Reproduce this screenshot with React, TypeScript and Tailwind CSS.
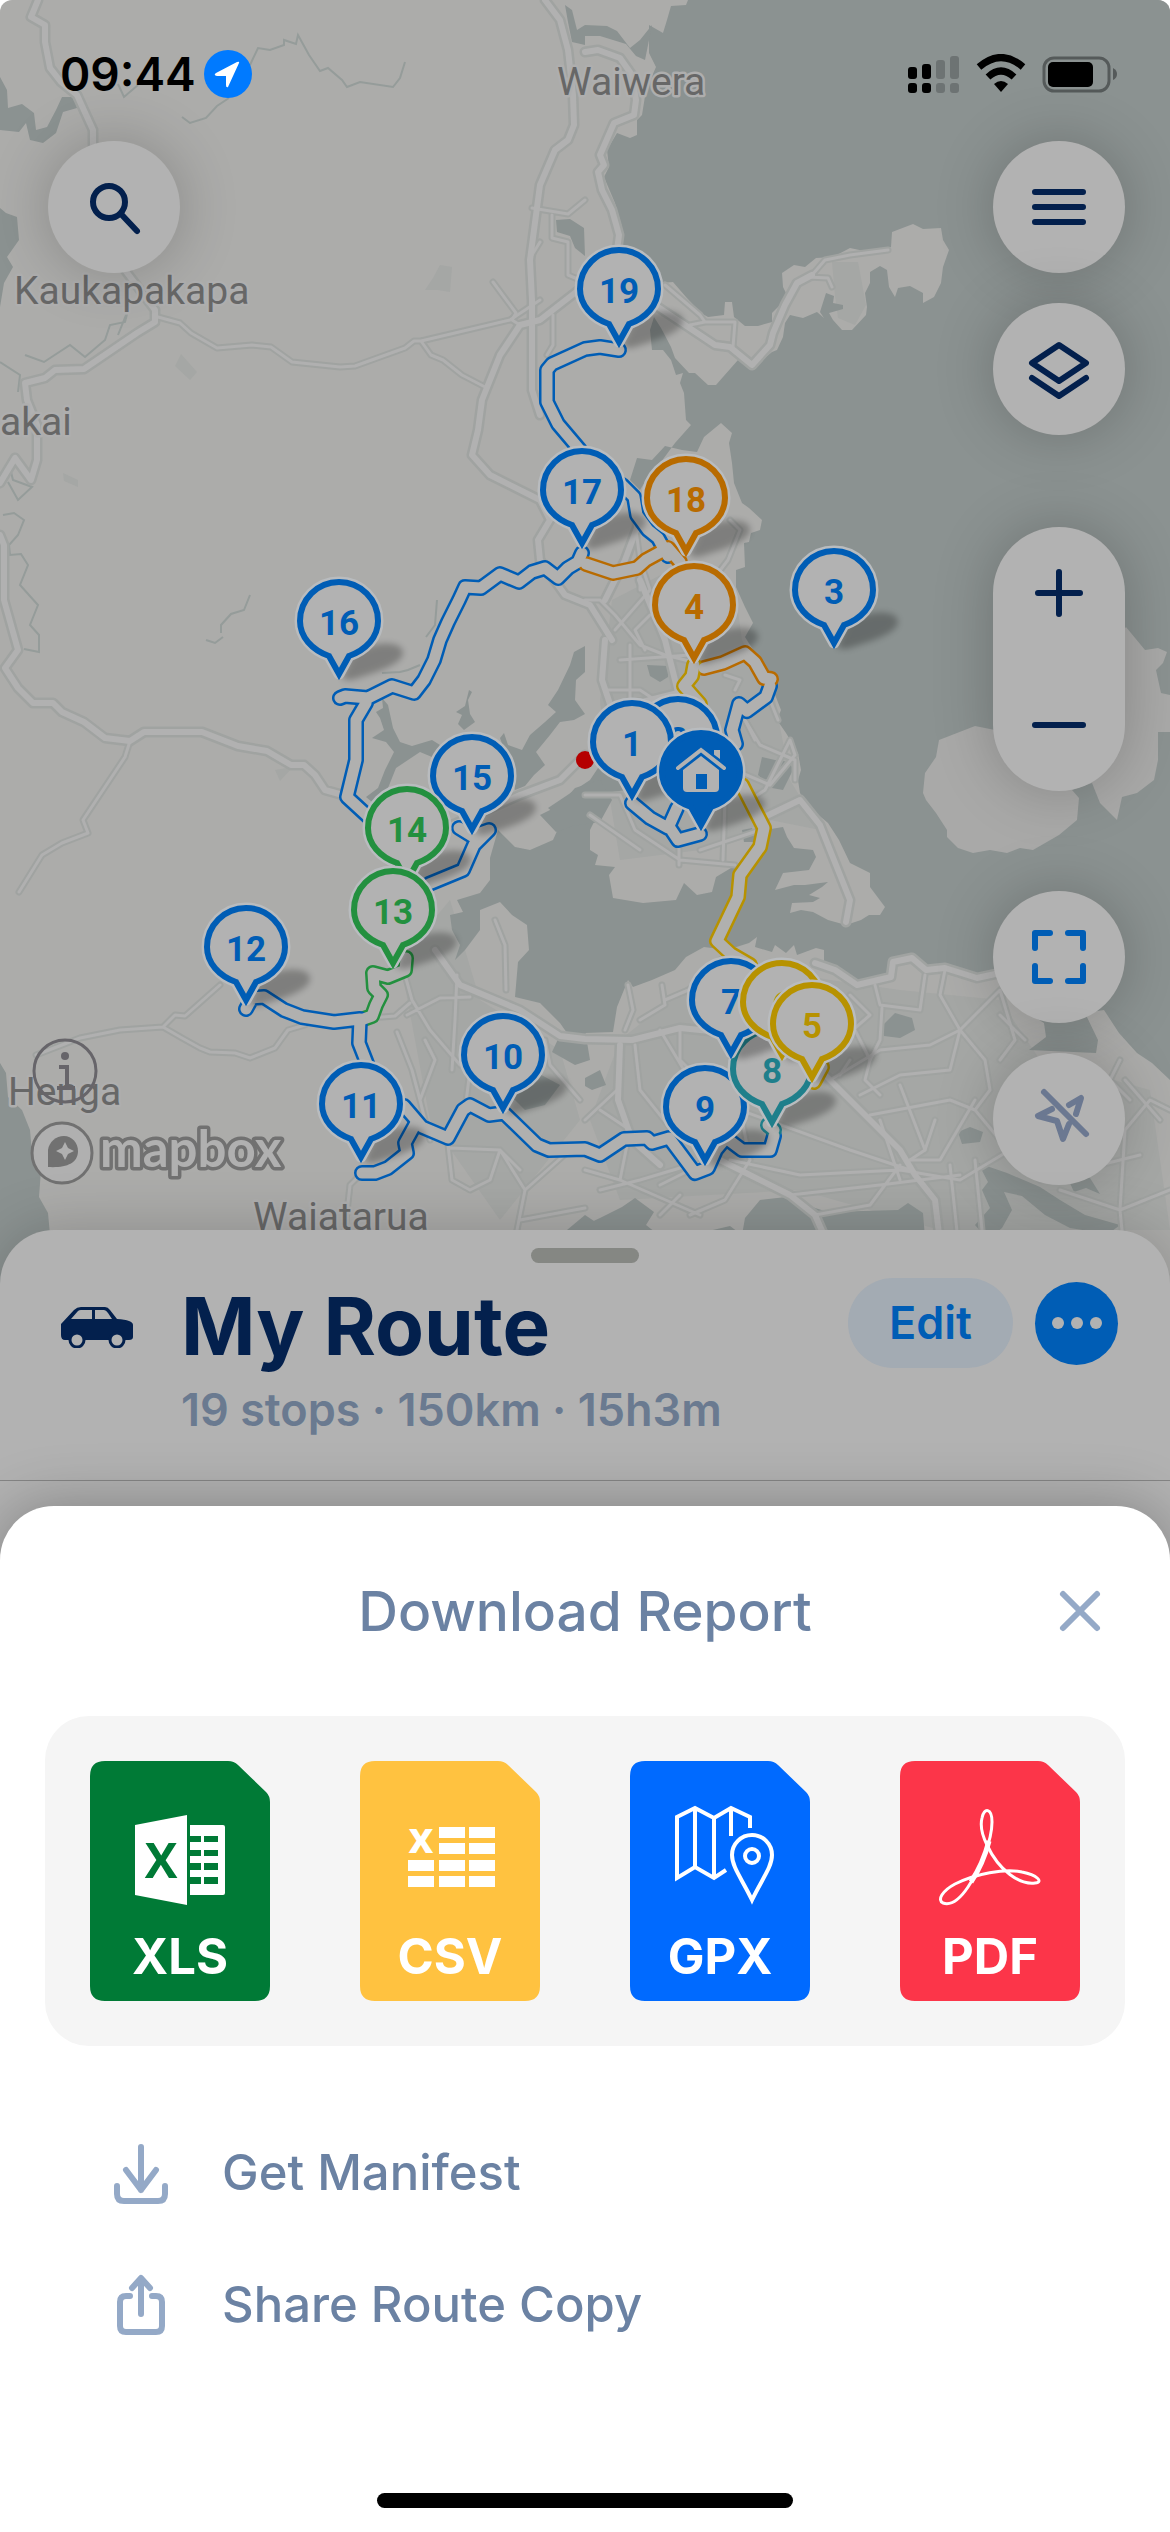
import type { ReactNode } from "react";

type Tone = "blue" | "green" | "orange" | "yellow" | "teal";

const TONES: Record<Tone, string> = {
  blue: "#005db5",
  green: "#23903f",
  orange: "#b86b00",
  yellow: "#b79200",
  teal: "#1f7f8b",
};

const WATER = [
  // open sea with the outer coast
  "M688 0L686 5 671 6 667 20 663 33 649 25 649 53 656 67 646 90 642 115 637 120 637 135 630 138 617 133 607 150 609 167 604 177 615 203 622 227 620 245 640 270 661 283 673 282 686 297 701 313 708 317 724 315 725 302 732 302 734 317 745 326 758 326 772 322 772 313 788 297 783 287 782 273 794 265 805 267 816 258 833 257 850 248 869 252 891 247 892 232 913 224 923 229 941 228 943 240 949 250 943 267 941 283 934 297 923 303 923 293 910 286 898 288 895 297 889 287 887 270 880 266 870 272 870 283 865 293 867 307 866 315 852 330 842 330 833 320 829 313 843 309 843 305 833 303 834 296 826 293 820 312 824 318 817 312 803 318 790 315 785 323 783 337 777 350 772 352 760 362 753 368 738 360 723 377 716 385 708 385 695 373 689 373 675 358 671 347 661 328 654 317 650 330 652 350 663 350 671 360 676 375 683 373 680 383 684 393 686 420 691 425 675 443 661 462 652 470 640 490 630 480 637 458 652 460 665 446 682 450 697 452 704 437 721 423 732 433 729 443 732 463 734 483 742 503 749 508 762 520 760 530 751 533 749 542 744 543 745 567 736 570 736 587 745 607 753 623 745 637 764 667 772 687 781 710 777 720 786 733 798 753 801 770 798 780 800 793 809 807 828 823 839 840 850 863 870 873 870 887 885 907 880 915 869 915 861 920 846 925 828 920 813 912 801 910 790 913 792 903 813 902 820 898 809 895 822 887 828 882 805 885 794 885 775 890 783 873 809 870 816 857 813 850 794 848 787 837 783 827 765 830 755 850 745 860 736 865 716 877 712 892 697 895 684 883 676 900 643 903 613 898 609 875 615 867 595 865 598 855 590 850 590 830 605 800 612 775 600 765 590 780 572 792 548 808 562 820 553 840 530 850 515 847 498 830 490 858 490 880 480 893 457 900 463 912 450 915 452 930 460 945 455 960 465 950 480 930 480 910 500 902 512 915 527 925 529 950 518 962 515 997 540 1003 560 1023 567 1033 585 1033 613 1032 617 1007 628 980 633 987 652 980 675 970 686 957 704 947 727 950 749 943 757 937 755 947 772 952 775 945 786 953 794 945 797 955 816 948 824 950 824 963 846 977 861 985 891 977 893 962 910 956 926 965 947 968 977 977 995 973 1007 993 1018 1007 1044 1023 1046 1037 1029 1050 1096 1053 1098 1040 1085 1013 1104 1010 1119 1033 1137 1053 1152 1063 1170 1080V0Z",
  "M0 77L7 90 8 108 22 104 34 113 36 130 47 127 56 110 62 97 75 97 77 108 63 112 56 133 43 143 30 140 26 123 19 132 0 130Z",
  "M0 208L6 213 17 217 19 240 7 257 13 267 4 283 0 307Z",
  "M0 1063L6 1073 8 1097 22 1110 30 1130 32 1153 41 1170 39 1197 48 1213 56 1300 0 1300Z",
  "M585 25L607 26 617 31 630 48 640 40 652 25 645 60 636 56 626 44 600 36 585 36Z",
  "M556 220L570 219 584 228 585 256 575 248 570 236 557 232Z",
  "M565 5L572 10 577 30 585 25 585 45 572 42 568 22Z",
  "M600 770L620 772 626 790 612 792 604 800Z",
  // creeks of the upper harbour
  "M382 698L388 705 393 728 400 742 412 746 432 740 440 745 432 757 420 752 408 760 396 768 388 788 372 802 366 797 378 788 385 770 394 752 386 742 372 738 384 730 380 718 376 712 383 708Z",
  "M469 690L472 692 468 700 470 714 475 722 464 730 458 724 462 715 456 712 465 706Z",
  "M585 646L574 652 570 665 558 690 548 705 556 712 545 722 530 735 522 750 508 745 504 733 500 738 505 752 490 765 510 770 515 790 525 786 534 775 545 765 536 752 550 735 560 722 574 720 585 714 575 700 576 680 585 672Z",
  "M540 815L560 805 575 788 600 780 612 800 600 822 572 826 556 832Z",
  // inland lakes
  "M647 665L668 666 668 677 660 682 650 676Z",
  "M762 757L775 760 790 762 793 770 783 790 772 788 758 775Z",
  "M742 830L752 828 758 842 744 842Z",
  "M880 1028L895 1013 912 1018 915 1030 900 1038 884 1036Z",
  "M958 1132L970 1127 983 1132 980 1142 962 1144Z",
  "M560 1035L585 1030 590 1060 575 1065 552 1052Z",
  "M500 1092L532 1070 560 1085 545 1105 525 1110 515 1100Z",
  "M585 1078L600 1070 606 1085 592 1090 585 1086Z",
  // southern harbour and river
  "M585 1225L600 1218 622 1207 635 1198 654 1212 646 1225 665 1240 700 1233 730 1226 742 1235 745 1218 760 1200 786 1197 815 1208 828 1212 898 1210 908 1203 923 1213 930 1300 585 1300Z",
  "M555 1240L585 1215 600 1225 600 1300 560 1300Z",
  "M978 1163L1007 1173 1040 1187 1060 1200 1085 1215 1120 1225 1108 1234 1070 1228 1045 1215 1022 1196 1004 1192 1012 1210 1002 1228 988 1240 975 1225 990 1208 982 1190 988 1182Z",
  "M1065 1172L1090 1178 1100 1194 1086 1188 1074 1192Z",
];

const ISLAND =
  "M923 793L925 773 936 757 939 740 975 726 1000 731 1060 700 1126 627 1145 650 1158 648 1167 652 1163 663 1156 670 1161 693 1170 695 1170 732 1158 732 1158 760 1154 780 1137 793 1122 797 1117 820 1100 803 1092 783 1072 790 1079 798 1077 820 1059 835 1033 850 1020 848 1007 853 990 850 973 853 958 848 947 837 947 830 936 813 926 800Z";

const SUBURBS = [
  "M612 600L690 560 735 590 742 640 775 700 790 780 820 830 770 820 700 850 620 860 610 800 600 700Z",
  "M400 960L450 900 480 1000 560 1050 580 1120 500 1220 430 1120Z",
  "M620 1040L720 960 830 980 900 990 1000 1000 1040 1060 1150 1090 1170 1230 940 1230 800 1190 620 1200 590 1120Z",
  "M832 262L858 262 866 305 855 325 838 318 835 296Z",
  "M440 265L452 267 450 292 438 290 425 290 433 278Z",
  "M181 354L197 372 190 380 175 366Z",
  "M63 473L78 480 78 487 64 481Z",
  "M275 770L293 767 280 781Z",
];

const CREEK_LINES = [
  "M250 65L258 48 270 50 284 45 284 40 296 44 298 35 309 55 320 71 328 68 342 80 347 87 360 82 393 87 400 78 405 62",
  "M182 117L190 123 206 118 217 106 229 98",
  "M118 84L124 97 138 85",
  "M10 468L13 480 32 487 18 500 8 482M3 515L14 513 24 520 18 535 9 545 10 555 21 554 28 565 20 585 38 605 30 625 39 635V652L24 649",
  "M250 595L244 610 231 614 221 625V633M206 640L215 643 223 637",
  "M437 600L435 625 426 637M382 673L400 672 408 670 420 665",
  "M0 362L20 375 18 392M25 355L44 362 70 345 85 357 105 340 110 325 125 322 128 310 118 335",
];

const ROADS_MAJOR = [
  "M38 0L31 17 45 25 45 42 50 68 61 82 77 95 93 130 93 145M125 270L140 290 155 310 155 322 137 333 84 369 55 370 45 378 25 383 27 400 37 425 37 460 31 480 15 458 6 473 0 483",
  "M0 535L4 545 4 600 18 650 5 668 18 688 33 703 53 703 62 712 84 722 105 738 130 741 144 732 202 732 238 746 267 751 291 765 304 765 315 775 325 790 350 797",
  "M545 0L560 20 568 50 573 95 574 125 568 140 555 150 540 185 530 260 532 300 532 390 540 415",
  "M585 285L540 320 520 325 500 355 482 400 478 430 472 455 490 475 540 500 550 520 538 540 540 560 565 595 590 605 612 640",
  "M585 52L598 50 620 58 632 75 636 100 634 115 614 123 600 155 604 165 598 172 602 190 612 210 619 235 617 250",
  "M655 305L715 345 730 347 752 365 770 345 773 333 785 305 797 283 812 275",
  "M445 828L520 795 560 780 585 755",
  "M435 950L460 985 520 1010 560 1036 585 1039 632 1040 680 1028 720 1032",
  "M815 963L835 970 857 985 891 977 893 962 912 958 926 970 945 968 977 978 1000 973",
  "M820 1070L870 1120 900 1150 915 1175 935 1200 942 1260",
  "M720 1160L790 1195 815 1215 835 1260",
  "M605 600L625 560 640 520M605 640L602 680 612 710 650 700 690 690M640 580L665 640 680 700",
  "M758 820L800 800 820 825 850 900 846 922",
  "M620 1045L618 1100 632 1140 660 1165",
];

const ROADS_MINOR = [
  "M158 317L180 323 191 333 217 348 252 345 271 347 292 362 340 367 355 366 405 348 414 341 421 341 510 320 540 300M421 341L431 355 443 360 462 375 485 387",
  "M493 282L516 313 512 320 520 325M532 208L568 214 585 200M552 215V238L568 242V275L580 280M553 315V345L547 355M532 255L540 242",
  "M130 741L125 757 83 820 88 833 62 843 42 855 19 892",
  "M36 1055L80 1038 120 1030 163 1027 175 1015 185 1016 220 985M163 1027L182 1038 200 1048 210 1052 235 1053 250 1058 275 1048 288 1030 305 1025",
  "M812 275L825 260 850 255 888 250M808 277L828 278 832 287M665 285L700 315 705 322 690 325M705 322L735 322 733 347",
  "M585 600L600 600 615 615 640 645 665 655 705 665M615 630L650 590 640 560M620 660L690 655M607 690L640 690 700 730M630 645V700M650 615L635 630 645 650",
  "M700 700L720 740 735 770 770 785 795 755 790 740 765 790 750 800M720 760L700 740M745 720L760 745 795 760 795 780M640 590L640 560 632 500M730 520L740 530 728 560 705 590",
  "M585 795L620 795 635 830 680 860 735 865M679 830V865M725 800L723 860M640 850L590 815M700 850L760 830",
  "M735 690L740 680 725 675M770 700L778 720M745 720L755 740",
  "M628 985L633 1010 625 1030M635 1045L640 1090 680 1140M660 1030L690 1080M617 1090L585 1120M680 1030L680 1060 710 1090M665 1000L700 985 720 960M640 1020L665 1005 662 985",
  "M405 975L412 1000 430 1030 460 1065M457 975L455 1020 452 1070M407 1015L440 998 470 997M370 1018L395 1016 410 1003M420 1100L435 1060 425 1040M470 1070L465 1110M397 1032L412 1070 420 1100 430 1140M545 1040L550 1065 580 1100",
  "M448 1145L452 1180 470 1190 490 1180 500 1150M500 1150L525 1190 515 1240M525 1190L570 1150M450 1148L500 1150 520 1170M345 1230L350 1185 365 1170M520 1220L585 1208",
  "M495 920L505 945 506 990",
  "M875 985L880 1005 920 1010 925 975M945 970L940 995 960 1030 1000 990 1015 1040 1000 1060M882 1008L880 1040 870 1060M960 1030L950 1070 900 1075 860 1095M1000 1015L1025 1040",
  "M830 1080L880 1050 930 1045 960 1030M870 1115L950 1100 975 1110 1000 1140 1040 1180M960 1030L985 1060 990 1090 975 1110M880 1120L900 1180M900 1085L925 1150 910 1160",
  "M730 1160L800 1175 900 1170 960 1180 1010 1150M790 1195L880 1185 960 1175M815 1215L870 1205 900 1165M700 1080L740 1110 750 1160 725 1200 690 1215M740 1110L850 1150 910 1170",
  "M585 1170L620 1180 700 1215M620 1180L630 1130 600 1110M660 1185L690 1170 720 1150M660 1215L680 1195M600 1190L640 1180 690 1165",
  "M950 1165L960 1260M975 1160L985 1260M910 1160L940 1160 975 1100M1125 1130L1150 1100 1170 1110M1125 1130L1120 1210 1170 1190M1100 1165L1140 1155M1060 1190L1120 1210 1125 1260M1120 1060L1110 1080 1130 1100",
  "M855 1030L870 1060 865 1080 880 1095M830 1050L870 1015 850 995M840 1075L850 1060M935 1120L925 1150M1125 1080L1160 1120",
];

const ROUTES: { tone: Tone; d: string }[] = [
  { tone: "blue", d: "M619 350L600 347 585 349 552 364 547 370 547 402 558 424 580 450" },
  { tone: "blue", d: "M622 485L634 497 637 515 648 530 658 538 668 556" },
  { tone: "blue", d: "M582 553L578 562 568 568 558 578 545 568 532 572 519 582 500 574 481 588 465 587 459 600 448 622 440 640 434 660 424 680 414 693 392 686 368 698 345 696 340 698" },
  { tone: "blue", d: "M366 703L356 720 356 760 347 797 372 820" },
  { tone: "blue", d: "M459 828L472 836 489 830 474 845 463 870 429 884" },
  { tone: "orange", d: "M586 564L613 573 637 568 646 560 668 548 680 562" },
  { tone: "blue", d: "M770 686L766 697 747 711 739 704 732 730 736 744" },
  { tone: "orange", d: "M704 668L723 663 745 653 755 662 764 678 771 679" },
  { tone: "yellow", d: "M694 665L692 676 684 686 700 704" },
  { tone: "yellow", d: "M742 785L764 828 760 847 740 875 738 897 717 941 731 954 750 965" },
  { tone: "blue", d: "M632 803L650 818 668 828 677 808M670 828L678 840 700 834" },
  { tone: "green", d: "M406 958L405 970 388 977 373 973 374 988 381 995 376 1005 372 1016 358 1021" },
  { tone: "blue", d: "M246 1009L252 998 264 997 284 1010 302 1017 334 1022 360 1019 359 1043 368 1066" },
  { tone: "blue", d: "M404 1106L422 1127 448 1138 463 1110 470 1105 489 1115 504 1113 537 1145 549 1150 585 1149 600 1155 624 1139 647 1138 652 1143 669 1138 695 1173 708 1168 716 1150 726 1138 742 1150 770 1150 774 1136" },
  { tone: "blue", d: "M416 1123L405 1143 407 1153 388 1168 375 1173 362 1173" },
  { tone: "teal", d: "M768 1125L774 1130" },
  { tone: "yellow", d: "M822 1067L814 1082" },
];

const PINS: { x: number; y: number; label: string; tone: Tone }[] = [
  { x: 619, y: 289, label: "19", tone: "blue" },
  { x: 582, y: 490, label: "17", tone: "blue" },
  { x: 686, y: 498, label: "18", tone: "orange" },
  { x: 834, y: 590, label: "3", tone: "blue" },
  { x: 694, y: 605, label: "4", tone: "orange" },
  { x: 339, y: 621, label: "16", tone: "blue" },
  { x: 678, y: 738, label: "2", tone: "blue" },
  { x: 632, y: 742, label: "1", tone: "blue" },
  { x: 472, y: 776, label: "15", tone: "blue" },
  { x: 407, y: 828, label: "14", tone: "green" },
  { x: 393, y: 910, label: "13", tone: "green" },
  { x: 246, y: 947, label: "12", tone: "blue" },
  { x: 503, y: 1055, label: "10", tone: "blue" },
  { x: 361, y: 1104, label: "11", tone: "blue" },
  { x: 705, y: 1107, label: "9", tone: "blue" },
  { x: 772, y: 1069, label: "8", tone: "teal" },
  { x: 731, y: 1000, label: "7", tone: "blue" },
  { x: 782, y: 1002, label: "6", tone: "yellow" },
  { x: 812, y: 1024, label: "5", tone: "yellow" },
];

const PLACES = [
  { x: 557, y: 95, name: "Waiwera" },
  { x: 14, y: 304, name: "Kaukapakapa" },
  { x: 0, y: 435, name: "akai" },
  { x: 8, y: 1105, name: "Henga" },
  { x: 253, y: 1230, name: "Waiatarua" },
];

const PIN_SHAPE =
  "M0 53L-10 35C-27 29-39 16-39 0A39 39 0 0 1 39 0C39 16 27 29 10 35Z";

function PinBase({ color, solid = false }: { color: string; solid?: boolean }) {
  return (
    <>
      <path d="M3 58L12 36C28 20 62 18 64 31C65 43 36 52 12 59Z" fill="#000" opacity=".26" filter="url(#soft)" />
      <path d={PIN_SHAPE} fill="#b9bcbf" stroke="#b9bcbf" strokeWidth="11" strokeLinejoin="round" />
      <path d={PIN_SHAPE} fill={solid ? color : "#b2b2b2"} stroke={color} strokeWidth="6" />
    </>
  );
}

function RouteMap() {
  return (
    <svg
      className="absolute inset-0 h-full w-full"
      viewBox="0 0 1170 1290"
      preserveAspectRatio="xMidYMin slice"
      role="img"
      aria-label="Route map with 19 stops"
    >
      <defs>
        <filter id="soft" x="-30%" y="-30%" width="160%" height="160%">
          <feGaussianBlur stdDeviation="3" />
        </filter>
      </defs>
      <rect width="1170" height="1290" fill="#acacaa" />
      <g fill="#a5a7a5">
        {SUBURBS.map((d) => (
          <path key={d} d={d} />
        ))}
      </g>
      <g fill="#8b9291">
        {WATER.map((d) => (
          <path key={d} d={d} />
        ))}
      </g>
      <path d={ISLAND} fill="#a9a9a8" />
      <g fill="none" stroke="#959c9a" strokeWidth="2">
        {CREEK_LINES.map((d) => (
          <path key={d} d={d} />
        ))}
      </g>
      <g fill="none" strokeLinejoin="round" strokeLinecap="round">
        {ROADS_MINOR.map((d) => (
          <path key={d} d={d} stroke="#a0a3a1" strokeWidth="7" />
        ))}
        {ROADS_MAJOR.map((d) => (
          <path key={d} d={d} stroke="#a0a3a1" strokeWidth="11" />
        ))}
        {ROADS_MINOR.map((d) => (
          <path key={d} d={d} stroke="#b0b0b0" strokeWidth="3" />
        ))}
        {ROADS_MAJOR.map((d) => (
          <path key={d} d={d} stroke="#b1b1b1" strokeWidth="6" />
        ))}
      </g>
      <g fontFamily="Roboto, sans-serif" fontSize="39" fill="#676767" stroke="#aeaeae" strokeWidth="5" paintOrder="stroke" strokeLinejoin="round">
        {PLACES.map((p) => (
          <text key={p.name} x={p.x} y={p.y}>
            {p.name}
          </text>
        ))}
      </g>
      <g fill="none" strokeLinejoin="round" strokeLinecap="round">
        {ROUTES.map((r) => (
          <path key={r.d} d={r.d} stroke={TONES[r.tone]} strokeWidth="16" />
        ))}
        {ROUTES.map((r) => (
          <path key={r.d} d={r.d} stroke="#b0b0af" strokeWidth="11" />
        ))}
      </g>
      <circle cx="585" cy="760" r="9" fill="#b50000" />
      {PINS.map((p) => (
        <g key={p.label} transform={`translate(${p.x} ${p.y})`}>
          <PinBase color={TONES[p.tone]} />
          <text y="14" textAnchor="middle" fontFamily="Roboto, sans-serif" fontWeight="700" fontSize="35" fill={TONES[p.tone]}>
            {p.label}
          </text>
        </g>
      ))}
      <g transform="translate(701 772)">
        <PinBase color={TONES.blue} solid />
        <path d="M14-21V-12L18-8V-21Z" fill="#b2b2b2" stroke="#b2b2b2" strokeWidth="2" />
        <path d="M-18-2L0-16 18-2V16Q18 20 14 20H-14Q-18 20-18 16Z" fill="#b2b2b2" />
        <path d="M-23-5L0-22 23-5" fill="none" stroke="#005db5" strokeWidth="8" />
        <path d="M-23-4L0-22 23-4" fill="none" stroke="#b2b2b2" strokeWidth="4" strokeLinecap="round" />
        <rect x="-5" y="2" width="11" height="15" fill="#005db5" />
      </g>
      <g fill="none" stroke="#67656a" strokeWidth="3">
        <circle cx="65" cy="1071" r="31" />
        <path d="M59 1067H67V1088M57 1088H75" strokeWidth="4" />
        <circle cx="65" cy="1056" r="4" fill="#67656a" stroke="none" />
      </g>
      <circle cx="62" cy="1153" r="30" fill="#b0b0b0" stroke="#717171" strokeWidth="3" />
      <path d="M48 1167V1150C49 1142 56 1136 64 1136C72 1136 78 1143 78 1151C78 1164 65 1168 48 1167Z" fill="#717171" />
      <path d="M65 1142L68 1148 74 1151 68 1154 65 1160 62 1154 56 1151 62 1148Z" fill="#b0b0b0" />
      <text x="100" y="1167" fontFamily="Lato, sans-serif" fontWeight="700" fontSize="51" fill="#b0b0b0" stroke="#717171" strokeWidth="7" paintOrder="stroke" strokeLinejoin="round">
        mapbox
      </text>
    </svg>
  );
}

function StatusBar() {
  return (
    <div className="flex h-[141px] items-start justify-between pt-[50px] pr-[52px] pl-[60px] text-black">
      <div className="flex items-center gap-2">
        <time className="text-[46px] leading-[48px] font-semibold">09:44</time>
        <svg className="size-12" viewBox="0 0 48 48" aria-label="Location in use">
          <circle cx="24" cy="24" r="24" fill="#007aff" />
          <path d="M35 13L24 37Q22 38 22 35V26H13Q9 25 12 23L33 12Q36 11 35 13Z" fill="#fff" />
        </svg>
      </div>
      <div className="flex items-center gap-4 pt-1">
        <svg className="h-10 w-[52px]" viewBox="0 0 52 40" aria-label="Signal">
          <g>
            <rect x="0" y="13" width="9" height="12" rx="3" />
            <rect x="14" y="10" width="9" height="15" rx="3" />
            <rect x="0" y="29" width="9" height="10" rx="3" />
            <rect x="14" y="29" width="9" height="10" rx="3" />
          </g>
          <g fill="#6d7373">
            <rect x="28" y="6" width="9" height="19" rx="3" />
            <rect x="42" y="2" width="9" height="23" rx="3" />
            <rect x="28" y="29" width="9" height="10" rx="3" />
            <rect x="42" y="29" width="9" height="10" rx="3" />
          </g>
        </svg>
        <svg className="h-10 w-[50px]" viewBox="0 0 50 40" aria-label="Wi-Fi">
          <path d="M3 13Q25-6 47 13M12 23Q25 11 38 23" fill="none" stroke="#000" strokeWidth="7" />
          <path d="M25 38L18 30Q25 24 32 30Z" />
        </svg>
        <svg className="h-10 w-[76px]" viewBox="0 0 76 40" aria-label="Battery">
          <rect x="2" y="4" width="65" height="33" rx="10" fill="none" stroke="#555a5a" strokeWidth="3" />
          <rect x="6" y="8" width="45" height="25" rx="5" />
          <path d="M71 14Q75 16 75 20T71 26Z" fill="#555a5a" />
        </svg>
      </div>
    </div>
  );
}

function RoundButton({ label, children }: { label: string; children: ReactNode }) {
  return (
    <button
      type="button"
      aria-label={label}
      className="flex size-[132px] items-center justify-center rounded-full bg-[#b2b2b2] text-[#03204d] shadow-[0_0_60px_rgba(0,0,0,0.22)]"
    >
      {children}
    </button>
  );
}

function Icon({ children, width = 6 }: { children: ReactNode; width?: number }) {
  return (
    <svg className="size-[66px]" viewBox="0 0 66 66" fill="none" stroke="currentColor" strokeWidth={width} strokeLinecap="round" strokeLinejoin="round" aria-hidden="true">
      {children}
    </svg>
  );
}

function MapControls() {
  return (
    <div className="flex items-start justify-between pr-[45px] pb-[105px] pl-12">
      <RoundButton label="Search">
        <Icon>
          <circle cx="28" cy="28" r="16" />
          <path d="M40 40L56 57" />
        </Icon>
      </RoundButton>
      <div className="flex flex-col">
        <RoundButton label="Menu">
          <Icon>
            <path d="M9 18H57M9 33H57M9 48H57" />
          </Icon>
        </RoundButton>
        <div className="mt-[30px]">
          <RoundButton label="Map layers">
            <Icon>
              <path d="M33 9L60 27 33 45 6 27ZM6 42L33 60 60 42" />
            </Icon>
          </RoundButton>
        </div>
        <div className="mt-[92px] flex h-[264px] w-[132px] flex-col rounded-full bg-[#b2b2b2] text-[#03204d] shadow-[0_0_60px_rgba(0,0,0,0.22)]">
          <button type="button" aria-label="Zoom in" className="flex flex-1 items-center justify-center">
            <Icon>
              <path d="M12 33H54M33 12V54" />
            </Icon>
          </button>
          <button type="button" aria-label="Zoom out" className="flex flex-1 items-center justify-center">
            <Icon>
              <path d="M9 33H57" />
            </Icon>
          </button>
        </div>
        <div className="mt-[100px]">
          <RoundButton label="Fit route">
            <span className="text-[#005db5]">
              <Icon>
                <path d="M9 24V9H24M42 9H57V24M57 42V57H42M24 57H9V42" />
              </Icon>
            </span>
          </RoundButton>
        </div>
        <div className="mt-[30px]">
          <RoundButton label="Location off">
            <span className="text-[#6b7891]">
              <Icon>
                <path d="M18 6L60 48" />
                <path d="M26 23L12 30 31 35 37 53 43 38M43 19L55 12 50 28" />
              </Icon>
            </span>
          </RoundButton>
        </div>
      </div>
    </div>
  );
}

function CarIcon() {
  return (
    <svg className="h-[41px] w-[72px]" viewBox="0 0 72 41" aria-label="Car">
      <path d="M0 17L13 3Q16 0 20 0H44Q47 0 49 3L56 12Q72 13 72 18V30Q72 33 68 33H4Q0 33 0 28Z" fill="#03204d" />
      <path d="M10 12L17 4Q18 3 20 3H31V12ZM34 3H43Q45 3 47 6L51 12H34Z" fill="#b2b2b2" />
      <g fill="#b2b2b2" stroke="#03204d" strokeWidth="3">
        <circle cx="16" cy="33" r="7" />
        <circle cx="56" cy="33" r="7" />
      </g>
    </svg>
  );
}

function RoutePanel() {
  return (
    <section className="relative -mt-[60px] flex h-[336px] flex-col rounded-t-[54px] bg-[#b2b2b2] shadow-[0_0_60px_rgba(0,0,0,0.2)]">
      <div className="mt-[18px] h-[15px] w-[108px] self-center rounded-full bg-[#858783]" />
      <div className="flex items-start border-b border-[#858585] pr-[52px] pb-[42px] pl-[61px]">
        <div className="mt-11 mr-12">
          <CarIcon />
        </div>
        <div className="flex-1">
          <h1 className="mt-[15px] text-[80px] leading-[96px] font-bold text-[#03204d]">My Route</h1>
          <p className="mt-2 text-[45px] leading-[56px] font-semibold text-[#6a7a90]">19 stops · 150km · 15h3m</p>
        </div>
        <div className="mt-[15px] flex items-center gap-[22px]">
          <button type="button" className="h-[90px] w-[165px] rounded-full bg-[#a3abb3] text-[45px] font-semibold text-[#005db5]">
            Edit
          </button>
          <button type="button" aria-label="More options" className="flex size-[83px] items-center justify-center gap-[7px] rounded-full bg-[#005db5]">
            <span className="size-3 rounded-full bg-[#b2b2b2]" />
            <span className="size-3 rounded-full bg-[#b2b2b2]" />
            <span className="size-3 rounded-full bg-[#b2b2b2]" />
          </button>
        </div>
      </div>
    </section>
  );
}

function FileButton({ name, fill, children }: { name: string; fill: string; children: ReactNode }) {
  return (
    <button type="button" className="grid h-[240px] w-[180px]">
      <svg className="h-[240px] w-[180px] [grid-area:1/1]" viewBox="0 0 180 240" aria-hidden="true">
        <path
          d="M15 0H138Q144 0 148 4L176 31Q180 35 180 41V225Q180 240 165 240H15Q0 240 0 225V15Q0 0 15 0Z"
          fill={fill}
        />
        {children}
      </svg>
      <span className="self-end justify-self-center pb-[14px] text-[49px] leading-[60px] font-bold text-white [grid-area:1/1]">
        {name}
      </span>
    </button>
  );
}

const CSV_CELLS = [
  [79, 66], [109, 66],
  [79, 82], [109, 82],
  [48, 99], [79, 99], [109, 99],
  [48, 115], [79, 115], [109, 115],
];

function FormatCard() {
  return (
    <div className="mx-[45px] flex justify-between rounded-[44px] bg-[#f5f5f5] p-[45px]">
      <FileButton name="XLS" fill="#007a36">
        <path d="M45 64L97 54V144L45 134ZM100 64H133Q135 64 135 66V132Q135 134 133 134H100Z" fill="#fff" />
        <path
          d="M100 75H111V81H100ZM114 75H128V81H114ZM100 89H111V95H100ZM114 89H128V95H114ZM100 102H111V109H100ZM114 102H128V109H114ZM100 116H111V123H100ZM114 116H128V123H114Z"
          fill="#007a36"
        />
        <text x="71" y="117" textAnchor="middle" fontFamily="Open Sans, sans-serif" fontWeight="700" fontSize="49" fill="#007a36">
          X
        </text>
      </FileButton>
      <FileButton name="CSV" fill="#ffc240">
        {CSV_CELLS.map(([x, y]) => (
          <rect key={`${x}-${y}`} x={x} y={y} width="26" height="11" fill="#fff" />
        ))}
        <text x="61" y="92" textAnchor="middle" fontFamily="Open Sans, sans-serif" fontWeight="700" fontSize="43" fill="#fff">
          x
        </text>
      </FileButton>
      <FileButton name="GPX" fill="#006aff">
        <g fill="none" stroke="#fff" strokeWidth="4">
          <path d="M120 67V56L101 47 84 57 65 47 47 56V117L65 106 84 117 96 109M65 47V106M84 57V117M101 47V75" />
          <path d="M122 139C112 118 102 106 102 94A20 20 0 0 1 142 94C142 106 132 118 122 139Z" />
          <circle cx="122" cy="95" r="7" />
        </g>
      </FileButton>
      <FileButton name="PDF" fill="#fc3549">
        <g fill="none" stroke="#fff" strokeWidth="3">
          <path d="M87 84C82 74 80 65 82 57C84 46 92 47 92 61C92 80 80 108 68 126C58 141 49 144 43 142C37 139 42 130 55 123C75 113 105 107 122 111C137 114 144 121 135 122C120 124 99 110 87 84Z" />
          <path d="M89 80Q83 103 71 121" strokeWidth="5" />
        </g>
      </FileButton>
    </div>
  );
}

function SheetAction({ label, children }: { label: string; children: ReactNode }) {
  return (
    <button type="button" className="flex h-[132px] items-center gap-12 text-left text-[49px] font-medium text-[#6b82a3]">
      <svg className="size-[66px]" viewBox="0 0 66 66" fill="none" stroke="#94a9c7" strokeWidth="6" strokeLinecap="round" strokeLinejoin="round" aria-hidden="true">
        {children}
      </svg>
      {label}
    </button>
  );
}

function DownloadSheet() {
  return (
    <section
      role="dialog"
      aria-labelledby="sheet-title"
      className="relative -mt-[60px] flex flex-1 flex-col rounded-t-[54px] bg-white shadow-[0_0_60px_rgba(0,0,0,0.28)]"
    >
      <header className="grid h-[210px] grid-cols-[1fr_auto_1fr] items-center px-[57px]">
        <h2 id="sheet-title" className="col-start-2 text-[55px] leading-[64px] font-medium text-[#6b82a3]">
          Download Report
        </h2>
        <button type="button" aria-label="Close" className="justify-self-end text-[#94a9c7]">
          <Icon>
            <path d="M16 16L50 50M50 16L16 50" />
          </Icon>
        </button>
      </header>
      <FormatCard />
      <div className="mt-[61px] flex flex-col pl-[108px]">
        <SheetAction label="Get Manifest">
          <path d="M33 7V50M18 30L33 50 48 30M9 46V54Q9 61 16 61H50Q57 61 57 54V46" />
        </SheetAction>
        <SheetAction label="Share Route Copy">
          <path d="M33 8V42M24 16L33 6 42 16M22 24H18Q12 24 12 30V54Q12 60 18 60H48Q54 60 54 54V30Q54 24 48 24H44" />
        </SheetAction>
      </div>
      <div className="mt-auto mb-6 h-[15px] w-[416px] self-center rounded-full bg-black" />
    </section>
  );
}

export default function App() {
  return (
    <div className="min-h-screen bg-white">
      <main className="flex min-h-screen flex-col overflow-hidden rounded-t-[12px] font-[Inter,sans-serif]">
        <section className="relative">
          <RouteMap />
          <div className="relative">
            <StatusBar />
            <MapControls />
          </div>
        </section>
        <RoutePanel />
        <DownloadSheet />
      </main>
    </div>
  );
}
